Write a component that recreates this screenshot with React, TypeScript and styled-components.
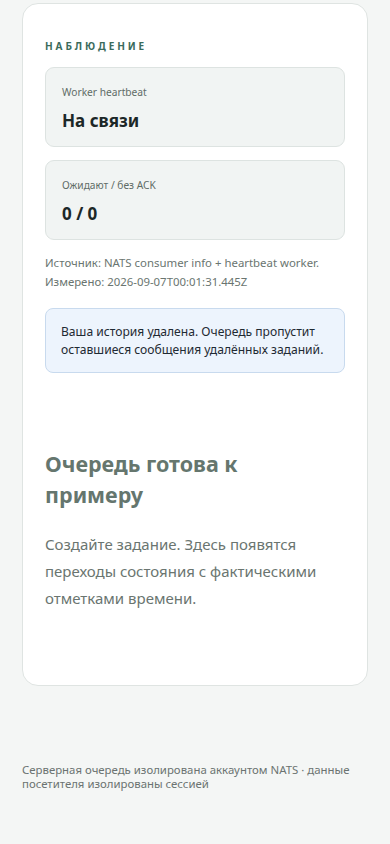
import React from "react";
import styled, { createGlobalStyle } from "styled-components";

const Global = createGlobalStyle`
  html, body { margin: 0; padding: 0; background: #f4f6f5; }
  body { font-family: "Noto Sans", "Open Sans", sans-serif; -webkit-font-smoothing: antialiased; }
  * { box-sizing: border-box; }
`;

const Page = styled.div`
  min-height: 844px;
  padding: 3px 22px 40px;
  display: flex;
  flex-direction: column;
`;

const Card = styled.section`
  background: #ffffff;
  border: 1px solid #dfe4e2;
  border-radius: 16px;
  padding: 35px 22px 73px;
  display: flex;
  flex-direction: column;
`;

const Eyebrow = styled.h2`
  margin: 0 0 14px;
  font-size: 10px;
  line-height: 14px;
  font-weight: 700;
  letter-spacing: 2.9px;
  color: #3b6b5c;
  text-transform: uppercase;
`;

const Metrics = styled.div`
  display: flex;
  flex-direction: column;
  gap: 13px;
`;

const Metric = styled.div`
  background: #f1f4f3;
  border: 1px solid #dde3e1;
  border-radius: 9px;
  padding: 17px 16px 14px;
  height: 80px;
`;

const MetricLabel = styled.div`
  font-size: 10.2px;
  line-height: 14px;
  color: #5f6c67;
`;

const MetricValue = styled.div`
  margin-top: 10px;
  font-size: 17px;
  line-height: 24px;
  font-weight: 700;
  color: #1c2727;
`;

const Source = styled.p`
  margin: 13px 0 0;
  font-size: 11.4px;
  line-height: 19px;
  color: #6a7570;
`;

const Notice = styled.div`
  margin-top: 17px;
  background: #edf4fd;
  border: 1px solid #c8daee;
  border-radius: 8px;
  padding: 14px 15px 13px;
  font-size: 12.1px;
  line-height: 18px;
  color: #1f2a33;
`;

const Empty = styled.div`
  margin-top: 75px;
`;

const EmptyTitle = styled.h3`
  margin: 0;
  max-width: 225px;
  font-size: 21.5px;
  line-height: 31px;
  font-weight: 700;
  color: #65766e;
`;

const EmptyText = styled.p`
  margin: 21px 0 0;
  font-size: 15px;
  line-height: 27px;
  color: #6a7570;
`;

const Footer = styled.footer`
  margin-top: 77px;
  font-size: 11.4px;
  line-height: 14px;
  color: #6b7371;
`;

export default function App() {
  return (
    <>
      <Global />
      <Page>
        <Card>
          <Eyebrow>Наблюдение</Eyebrow>
          <Metrics>
            <Metric>
              <MetricLabel>Worker heartbeat</MetricLabel>
              <MetricValue>На связи</MetricValue>
            </Metric>
            <Metric>
              <MetricLabel>Ожидают / без ACK</MetricLabel>
              <MetricValue>0 / 0</MetricValue>
            </Metric>
          </Metrics>
          <Source>
            Источник: NATS consumer info + heartbeat worker.
            <br />
            Измерено: 2026-09-07T00:01:31.445Z
          </Source>
          <Notice>
            Ваша история удалена. Очередь пропустит оставшиеся сообщения удалённых заданий.
          </Notice>
          <Empty>
            <EmptyTitle>Очередь готова к примеру</EmptyTitle>
            <EmptyText>
              Создайте задание. Здесь появятся переходы состояния с фактическими отметками времени.
            </EmptyText>
          </Empty>
        </Card>
        <Footer>
          Серверная очередь изолирована аккаунтом NATS · данные посетителя изолированы сессией
        </Footer>
      </Page>
    </>
  );
}
